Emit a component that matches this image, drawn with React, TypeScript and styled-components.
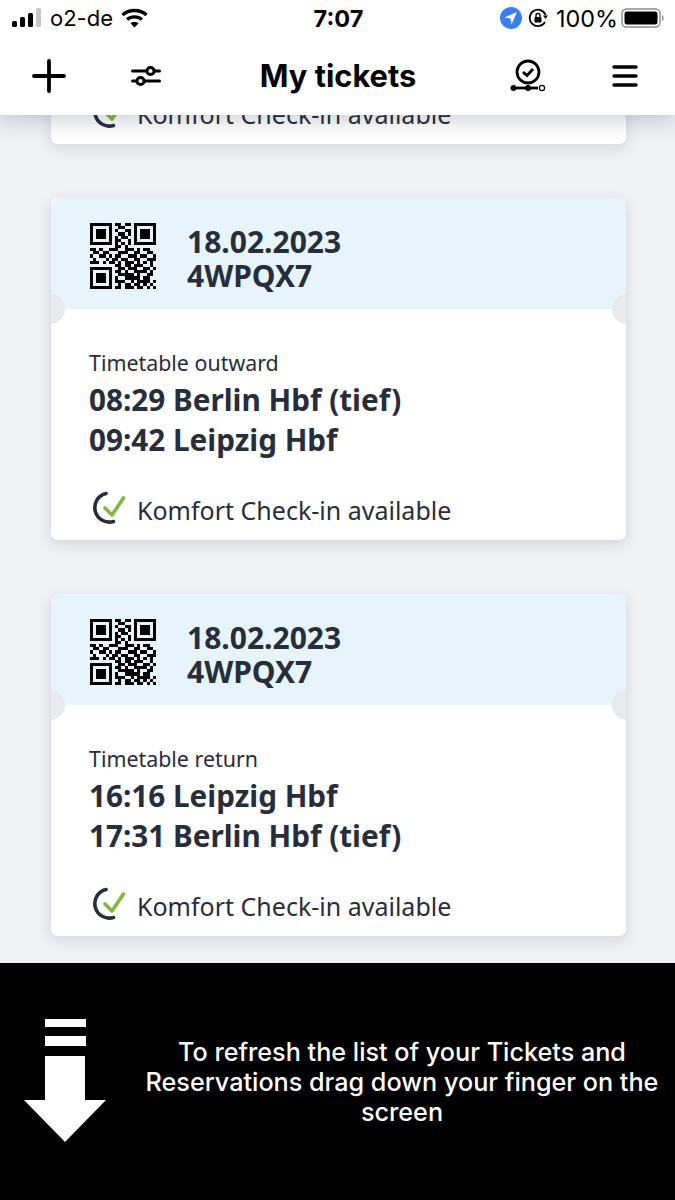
import React from "react";
import styled, { createGlobalStyle } from "styled-components";

type Ticket = {
  id: number;
  label: string;
  first: string;
  second: string;
};

const tickets: Ticket[] = [
  { id: 1, label: "Timetable return", first: "16:16 Leipzig Hbf", second: "17:31 Berlin Hbf (tief)" },
  { id: 2, label: "Timetable outward", first: "08:29 Berlin Hbf (tief)", second: "09:42 Leipzig Hbf" },
  { id: 3, label: "Timetable return", first: "16:16 Leipzig Hbf", second: "17:31 Berlin Hbf (tief)" },
];

const QR_ROWS = [
  "111111101101101111111",
  "100000100110001000001",
  "101110101001101011101",
  "101110100110101011101",
  "101110101011001011101",
  "100000101100101000001",
  "111111101010101111111",
  "000000001101000000000",
  "110100111001110101100",
  "011011000111001100110",
  "100110101100111011001",
  "010001011011001100111",
  "111010110101110101010",
  "000000001101101110010",
  "111111100110111001101",
  "100000101101001111010",
  "101110100111110100110",
  "101110101001111101100",
  "101110101110010111101",
  "100000100101101101010",
  "111111101101110110101",
];

const GlobalStyle = createGlobalStyle`
  html, body {
    margin: 0;
    padding: 0;
    background: #eff1f5;
  }
  * {
    box-sizing: border-box;
  }
`;

const Screen = styled.div`
  width: 675px;
  height: 1200px;
  display: flex;
  flex-direction: column;
  overflow: hidden;
  background: #eff1f5;
`;

const Header = styled.header`
  flex: none;
  height: 115px;
  background: #fff;
  box-shadow: 0 3px 22px rgba(40, 50, 70, 0.28);
  position: relative;
  z-index: 2;
  color: #000;
`;

const StatusBar = styled.div`
  height: 38px;
  padding: 0 10px 2px 12px;
  display: grid;
  grid-template-columns: 1fr auto 1fr;
  align-items: center;
  font-family: Inter, "Liberation Sans", sans-serif;
  font-size: 23px;
`;

const StatusLeft = styled.div`
  display: flex;
  align-items: center;
  gap: 7px;
`;

const StatusRight = styled.div`
  display: flex;
  align-items: center;
  justify-content: flex-end;
  gap: 6px;
`;

const Clock = styled.div`
  font-weight: 700;
  font-size: 23.5px;
`;

const Carrier = styled.span`
  font-size: 22px;
  margin-right: 1px;
`;

const Percent = styled.span`
  font-size: 23.4px;
  margin: 0 -3px 0 2px;
`;

const Nav = styled.nav`
  height: 77px;
  padding-bottom: 2px;
  display: grid;
  grid-template-columns: 98px 96px 288px 92px 101px;
  align-items: center;
  justify-items: center;
`;

const Title = styled.h1`
  margin: 0;
  font-family: Inter, "Liberation Sans", sans-serif;
  font-size: 30.8px;
  font-weight: 700;
`;

const TicketList = styled.main`
  flex: 1;
  min-height: 0;
  padding: 0 49px 27px 51px;
  display: flex;
  flex-direction: column;
  justify-content: flex-end;
  gap: 54px;
  overflow: hidden;
`;

const Card = styled.article`
  flex: none;
  height: 342px;
  position: relative;
  border-radius: 7px;
  overflow: hidden;
  background: #fff;
  box-shadow: 0 4px 14px rgba(40, 50, 70, 0.14);
  font-family: "Noto Sans", "Open Sans", sans-serif;
  color: #282d3c;
`;

const Notch = styled.span<{ $side: "left" | "right" }>`
  position: absolute;
  top: 96px;
  ${(p) => p.$side}: -15px;
  width: 29px;
  height: 30px;
  border-radius: 50%;
  background: #e8eaee;
`;

const CardTop = styled.div`
  height: 111px;
  padding: 25px 0 0 39px;
  display: flex;
  gap: 31px;
  background: #e7f4fb;
`;

const TicketMeta = styled.div`
  font-size: 30px;
  font-weight: 700;
  line-height: 34px;
  padding-top: 2px;
`;

const CardBody = styled.div`
  padding: 36px 0 0 38px;
`;

const Direction = styled.div`
  font-size: 21.4px;
  line-height: 35px;
`;

const Connection = styled.div`
  font-size: 29.7px;
  font-weight: 700;
  line-height: 40px;
`;

const Komfort = styled.div`
  margin-top: 31px;
  margin-left: 3px;
  display: flex;
  align-items: center;
  gap: 11px;
  font-size: 25px;
  line-height: 38px;
`;

const RefreshHint = styled.footer`
  flex: none;
  height: 237px;
  padding: 56px 16px 0 24px;
  display: flex;
  gap: 39px;
  background: #000;
`;

const HintText = styled.p`
  flex: 1;
  margin: 0;
  padding-top: 18px;
  color: #fff;
  font-family: Inter, "Liberation Sans", sans-serif;
  font-size: 25.2px;
  font-weight: 500;
  line-height: 30px;
  text-align: center;
`;

const SignalIcon = () => (
  <svg width="31" height="20" viewBox="0 0 31 20">
    <rect x="0" y="13" width="5" height="6" rx="1.5" fill="#000" />
    <rect x="8" y="9" width="5" height="10" rx="1.5" fill="#000" />
    <rect x="16" y="5" width="5" height="14" rx="1.5" fill="#000" />
    <rect x="24" y="0" width="5" height="19" rx="1.5" fill="#c8c8c8" />
  </svg>
);

const WifiIcon = () => (
  <svg width="27" height="20" viewBox="0 0 27 20" fill="none" stroke="#000" strokeWidth="3.4">
    <path d="M1.5 7 C8 1 19 1 25.5 7" />
    <path d="M6 11.5 C10 8 17 8 21 11.5" />
    <path d="M13.5 19.5 L9.5 15.2 C11.5 13.6 15.5 13.6 17.5 15.2 Z" fill="#000" stroke="none" />
  </svg>
);

const LocationIcon = () => (
  <svg width="22" height="22" viewBox="0 0 22 22">
    <circle cx="11" cy="11" r="11" fill="#3a7ff0" />
    <path d="M17 5 L4.5 10.5 L10.5 11.5 L11.5 17.5 Z" fill="#fff" />
  </svg>
);

const RotationLockIcon = () => (
  <svg width="20" height="20" viewBox="0 0 20 20" fill="none" stroke="#000" strokeWidth="1.8">
    <path d="M17 14 A8.2 8.2 0 1 1 17.6 7" />
    <path d="M15 7.5 L20 7.5 L17.5 11 Z" fill="#000" stroke="none" />
    <rect x="6.5" y="9" width="7" height="5.5" rx="1" fill="#000" stroke="none" />
    <path d="M8 9 V7.5 A2 2 0 0 1 12 7.5 V9" strokeWidth="1.4" />
  </svg>
);

const BatteryIcon = () => (
  <svg width="44" height="20" viewBox="0 0 44 20">
    <rect x="1" y="1" width="38" height="18" rx="4.5" fill="none" stroke="#8a8a8a" strokeWidth="1.4" />
    <rect x="3.5" y="3.5" width="33" height="13" rx="2.5" fill="#000" />
    <path d="M41 7 C43 7.5 43 12.5 41 13 Z" fill="#8a8a8a" />
  </svg>
);

const PlusIcon = () => (
  <svg width="34" height="34" viewBox="0 0 34 34" stroke="#000" strokeWidth="3.8" strokeLinecap="round">
    <path d="M17 2 V32 M2 17 H32" />
  </svg>
);

const FilterIcon = () => (
  <svg width="30" height="22" viewBox="0 0 30 22" fill="none" stroke="#000" strokeWidth="3" strokeLinecap="round">
    <path d="M1.5 6 H15 M24 6 H28.5 M1.5 16 H5 M14 16 H28.5" />
    <circle cx="19.5" cy="6" r="3.6" />
    <circle cx="9.5" cy="16" r="3.6" />
  </svg>
);

const TimelineIcon = () => (
  <svg width="36" height="34" viewBox="0 0 36 34" fill="none" stroke="#000">
    <circle cx="18" cy="13" r="11" strokeWidth="2.8" />
    <path d="M13 13 L17 16.5 L23 10" strokeWidth="2.8" />
    <path d="M4 29 H28" strokeWidth="2.8" />
    <circle cx="3.5" cy="29" r="2.6" fill="#000" strokeWidth="1" />
    <circle cx="18" cy="29" r="2.6" fill="#000" strokeWidth="1" />
    <circle cx="32" cy="29" r="2.6" fill="#fff" strokeWidth="1.2" />
  </svg>
);

const MenuIcon = () => (
  <svg width="26" height="22" viewBox="0 0 26 22" stroke="#000" strokeWidth="3.4" strokeLinecap="round">
    <path d="M2 2 H24 M2 11 H24 M2 20 H24" />
  </svg>
);

const QrCode = () => (
  <svg width="66" height="66" viewBox="0 0 21 21" shapeRendering="crispEdges">
    {QR_ROWS.map((row, y) =>
      row.split("").map((cell, x) =>
        cell === "1" ? <rect key={`${x}-${y}`} x={x} y={y} width="1" height="1" fill="#000" /> : null
      )
    )}
  </svg>
);

const CheckInIcon = () => (
  <svg width="34" height="38" viewBox="0 0 34 38" fill="none" strokeLinecap="round">
    <path d="M14 2.5 A14.5 14.5 0 1 0 21.5 30.5" stroke="#282d3c" strokeWidth="3.6" />
    <path d="M13 17 L20 24 L31.5 7" stroke="#82b93c" strokeWidth="3.6" strokeLinejoin="round" />
  </svg>
);

const ArrowIcon = () => (
  <svg width="82" height="124" viewBox="0 0 82 124" fill="#fff">
    <rect x="21" y="0" width="41" height="8" />
    <rect x="21" y="17" width="41" height="10" />
    <path d="M21 37 H61 V81 H82 L41 123 L0 81 H21 Z" />
  </svg>
);

const TicketCard = ({ ticket }: { ticket: Ticket }) => (
  <Card>
    <CardTop>
      <QrCode />
      <TicketMeta>
        <div>18.02.2023</div>
        <div>4WPQX7</div>
      </TicketMeta>
    </CardTop>
    <Notch $side="left" />
    <Notch $side="right" />
    <CardBody>
      <Direction>{ticket.label}</Direction>
      <Connection>{ticket.first}</Connection>
      <Connection>{ticket.second}</Connection>
      <Komfort>
        <CheckInIcon />
        Komfort Check-in available
      </Komfort>
    </CardBody>
  </Card>
);

const App = () => (
  <Screen>
    <GlobalStyle />
    <Header>
      <StatusBar>
        <StatusLeft>
          <SignalIcon />
          <Carrier>o2-de</Carrier>
          <WifiIcon />
        </StatusLeft>
        <Clock>7:07</Clock>
        <StatusRight>
          <LocationIcon />
          <RotationLockIcon />
          <Percent>100%</Percent>
          <BatteryIcon />
        </StatusRight>
      </StatusBar>
      <Nav>
        <PlusIcon />
        <FilterIcon />
        <Title>My tickets</Title>
        <TimelineIcon />
        <MenuIcon />
      </Nav>
    </Header>
    <TicketList>
      {tickets.map((t) => (
        <TicketCard key={t.id} ticket={t} />
      ))}
    </TicketList>
    <RefreshHint>
      <ArrowIcon />
      <HintText>To refresh the list of your Tickets and Reservations drag down your finger on the screen</HintText>
    </RefreshHint>
  </Screen>
);

export default App;
